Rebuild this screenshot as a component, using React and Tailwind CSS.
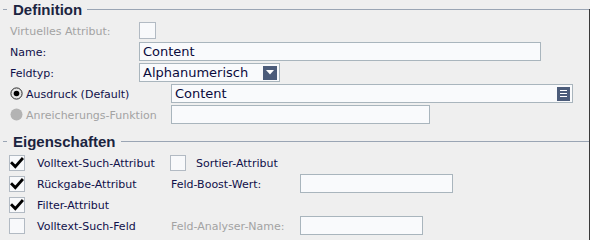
import React from "react";

const font = { fontFamily: '"DejaVu Sans", sans-serif' };
const headFont = { fontFamily: '"Liberation Sans", Arial, sans-serif' };

function Header({ title }) {
  return (
    <div className="flex items-center h-[19px]">
      <div className="w-[4px] h-px bg-[#9aa5b4] ml-[3px]" />
      <div className="ml-[6px] text-[15px] font-bold text-[#1b2440] leading-none" style={headFont}>{title}</div>
      <div className="flex-1 h-px bg-[#9aa5b4] ml-[5px] mr-[1px]" />
    </div>
  );
}

function Box({ checked, className = "", size = "w-[17px] h-[17px]" }) {
  return (
    <div className={size + " border border-[#b2bac3] bg-[#f8f9fb] flex items-center justify-center " + className}>
      {checked && (
        <svg width="14" height="14" viewBox="0 0 14 14">
          <path d="M2 7.2 L5.3 10.6 L12 3" fill="none" stroke="#000" strokeWidth="2.8" strokeLinecap="square" />
        </svg>
      )}
    </div>
  );
}

function Input({ w, value, children }) {
  return (
    <div className={"h-[19px] border border-[#a9b5bd] bg-[#f9fafc] flex items-center pl-[3px] text-[13px] text-[#0a0a3c] " + w}>
      <span className="flex-1 pt-[1px]">{value}</span>
      {children}
    </div>
  );
}

function Radio({ on }) {
  return on ? (
    <svg width="13" height="13" viewBox="0 0 13 13">
      <circle cx="6.5" cy="6.5" r="5.6" fill="#e6e6e6" stroke="#2a2a2a" strokeWidth="1" />
      <circle cx="6.5" cy="6.5" r="2.8" fill="#000" />
    </svg>
  ) : (
    <svg width="13" height="13" viewBox="0 0 13 13">
      <circle cx="6.5" cy="6.5" r="6" fill="#b3b3b3" />
    </svg>
  );
}

export default function App() {
  const label = "text-[11px] leading-[13px] pt-[2px] text-[#10104a]";
  const gray = "text-[11px] leading-[13px] pt-[2px] text-[#a3a3a3]";
  return (
    <div className="relative w-[590px] h-[240px] bg-[#efefef] overflow-hidden" style={font}>
      <div className="absolute right-0 top-[9px] bottom-0 w-px bg-[#3a3a3a]" />
      <Header title="Definition" />
      <div className="pt-[1px]">
        <div className="flex items-center h-[21px]">
          <div className={"w-[139px] pl-[10px] " + gray}>Virtuelles Attribut:</div>
          <Box />
        </div>
        <div className="flex items-center h-[21px]">
          <div className={"w-[139px] pl-[10px] " + label}>Name:</div>
          <Input w="w-[402px]" value="Content" />
        </div>
        <div className="flex items-center h-[21px]">
          <div className={"w-[139px] pl-[10px] " + label}>Feldtyp:</div>
          <Input w="w-[141px]" value="Alphanumerisch">
            <div className="w-[14px] h-[14px] bg-[#4c5c7a] mr-[2px] flex items-center justify-center">
              <svg width="8" height="5" viewBox="0 0 8 5"><path d="M0 0 H8 L4 4.5 Z" fill="#fff" /></svg>
            </div>
          </Input>
        </div>
        <div className="flex items-center h-[21px]">
          <div className="w-[171px] pl-[10px] flex items-center gap-[3px]">
            <Radio on />
            <span className={label}>Ausdruck (Default)</span>
          </div>
          <Input w="w-[402px]" value="Content">
            <div className="w-[13px] h-[14px] bg-[#4c5c7a] mr-[2px] flex flex-col items-center justify-center gap-[2px]">
              <div className="w-[7px] h-px bg-white" />
              <div className="w-[7px] h-px bg-white" />
              <div className="w-[7px] h-px bg-white" />
            </div>
          </Input>
        </div>
        <div className="flex items-center h-[21px]">
          <div className="w-[171px] pl-[10px] flex items-center gap-[3px]">
            <Radio />
            <span className={gray}>Anreicherungs-Funktion</span>
          </div>
          <Input w="w-[259px]" value="" />
        </div>
      </div>
      <div className="mt-[7px]">
        <Header title="Eigenschaften" />
      </div>
      <div className="pt-[1px]">
        <div className="flex items-center h-[21px]">
          <Box checked size="w-[16px] h-[16px]" className="ml-[9px]" />
          <div className={"ml-[12px] w-[133px] " + label}>Volltext-Such-Attribut</div>
          <Box size="w-[16px] h-[16px]" />
          <div className={"ml-[10px] " + label}>Sortier-Attribut</div>
        </div>
        <div className="flex items-center h-[21px]">
          <Box checked size="w-[16px] h-[16px]" className="ml-[9px]" />
          <div className={"ml-[12px] w-[134px] " + label}>Rückgabe-Attribut</div>
          <div className={"w-[129px] " + label}>Feld-Boost-Wert:</div>
          <Input w="w-[153px]" value="" />
        </div>
        <div className="flex items-center h-[21px]">
          <Box checked size="w-[16px] h-[16px]" className="ml-[9px]" />
          <div className={"ml-[12px] " + label}>Filter-Attribut</div>
        </div>
        <div className="flex items-center h-[21px]">
          <Box size="w-[16px] h-[16px]" className="ml-[9px]" />
          <div className={"ml-[12px] w-[134px] " + label}>Volltext-Such-Feld</div>
          <div className={"w-[129px] " + gray}>Feld-Analyser-Name:</div>
          <Input w="w-[123px]" value="" />
        </div>
      </div>
    </div>
  );
}
